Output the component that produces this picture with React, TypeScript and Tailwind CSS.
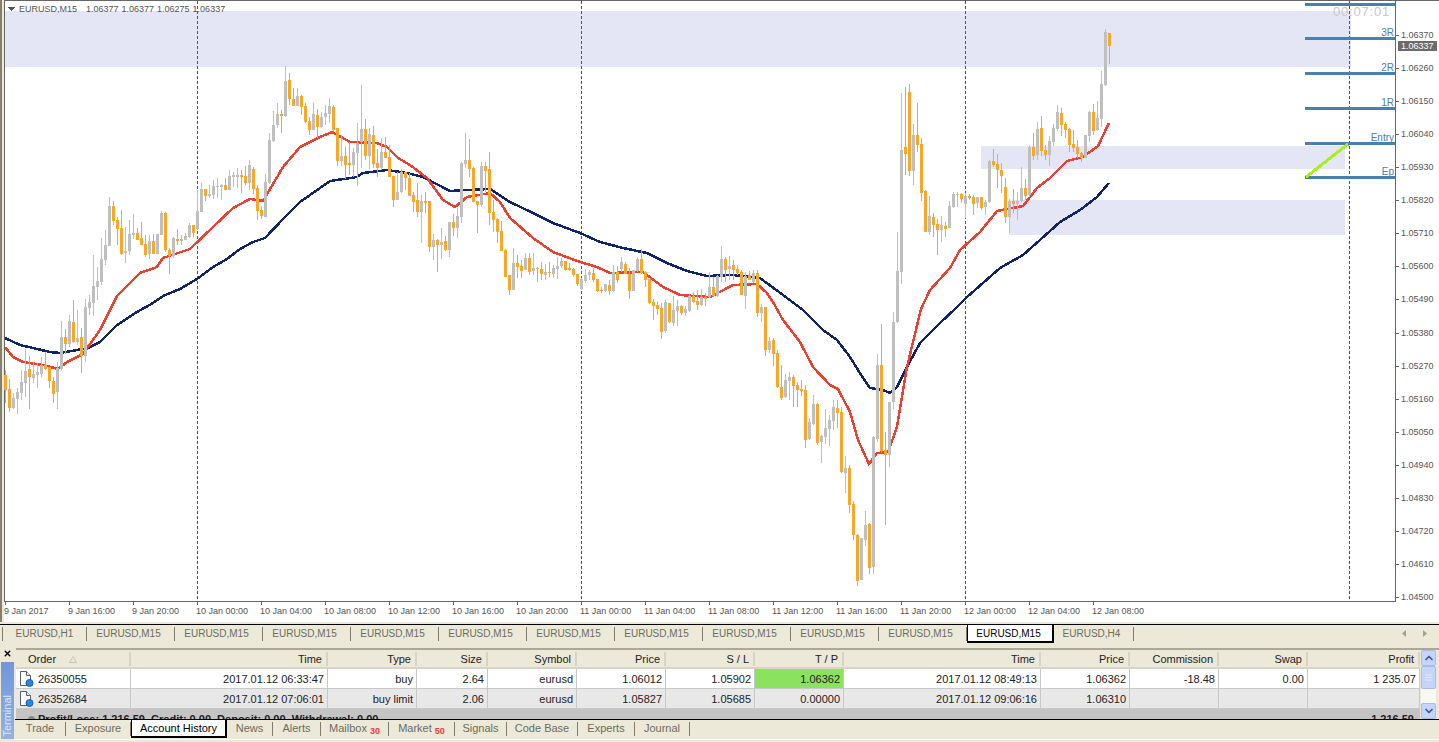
import { ChevronDown, ChevronUp, Menu, X } from 'lucide-react';

// [colour, wick top, body top, body bottom, wick bottom]; one bar every 4px from x=5
type Bar = ['o' | 'g', number, number, number, number];

const bars: Bar[] = [
  ['o',370,375,390,403],['o',379,389,408,412],['g',393,398,408,409],['g',388,392,399,414],['g',370,382,393,400],
  ['g',349,371,383,397],['o',356,369,377,409],['g',362,374,378,383],['g',363,372,375,388],['g',357,365,374,377],
  ['o',352,365,369,370],['o',367,367,381,388],['o',377,381,394,403],['g',362,368,392,409],['g',321,337,369,370],
  ['o',329,337,344,354],['g',315,321,344,347],['o',300,322,342,343],['g',310,338,342,345],['o',328,337,356,373],
  ['g',299,307,356,362],['g',295,302,308,315],['g',255,286,303,316],['g',267,281,287,300],['g',238,259,282,285],
  ['g',230,245,260,265],['g',197,206,246,246],['o',201,206,221,225],['o',217,220,229,245],['o',210,228,254,255],
  ['g',227,251,253,263],['g',220,234,251,255],['g',214,233,235,239],['o',228,233,240,240],['o',222,238,245,245],
  ['o',235,244,255,257],['g',235,241,254,259],['o',234,241,254,254],['g',234,234,254,254],['g',211,213,235,235],
  ['o',212,213,250,252],['o',248,250,256,274],['g',237,238,256,258],['o',229,239,241,245],['g',235,239,241,245],
  ['g',233,236,240,240],['g',223,225,237,238],['o',225,225,233,237],['g',190,211,229,230],['g',183,189,212,212],
  ['o',189,189,196,201],['g',185,194,196,198],['g',180,186,195,199],['g',178,186,187,198],['g',184,185,187,200],
  ['o',178,185,190,190],['g',170,176,190,190],['g',172,175,177,187],['g',168,175,177,188],['o',170,175,177,193],
  ['o',166,176,183,185],['g',160,165,183,190],['o',167,169,189,194],['o',185,188,211,220],['o',206,210,216,219],
  ['g',174,182,217,217],['g',133,140,183,184],['g',111,125,141,142],['g',103,114,125,128],['o',110,114,116,133],
  ['g',66,81,116,117],['o',73,80,99,105],['o',88,99,106,106],['g',88,96,106,106],['o',95,96,107,115],
  ['o',103,106,122,123],['o',117,121,130,135],['g',103,114,130,130],['o',109,115,127,138],['g',112,117,127,128],
  ['g',105,113,117,125],['g',98,106,114,123],['o',105,107,130,132],['o',128,128,161,166],['g',135,156,161,166],
  ['o',147,156,165,179],['o',142,163,165,175],['g',148,152,165,177],['g',123,143,153,186],['g',85,129,142,168],
  ['o',119,129,156,160],['g',128,134,156,169],['o',126,135,164,168],['o',149,163,168,177],['g',138,152,168,170],
  ['o',137,152,158,158],['o',145,157,177,177],['o',176,176,200,207],['g',172,192,200,200],['g',169,172,192,193],
  ['o',172,172,178,190],['o',173,178,196,196],['o',192,195,202,212],['o',183,200,212,217],['g',195,201,212,243],
  ['o',192,201,203,213],['o',201,201,247,252],['g',234,240,247,260],['o',239,240,245,272],['g',228,242,245,259],
  ['o',236,241,250,251],['g',222,222,250,257],['o',214,222,228,236],['g',208,216,228,238],['g',162,163,217,223],
  ['g',133,160,164,168],['o',139,160,169,177],['o',167,168,202,202],['o',201,201,205,233],['g',162,166,205,207],
  ['o',162,166,171,192],['o',152,169,213,225],['o',200,212,220,232],['o',218,219,232,243],['o',221,231,251,251],
  ['o',249,250,277,277],['o',275,275,290,295],['g',248,263,290,290],['o',255,263,267,278],['o',260,266,271,278],
  ['g',253,258,270,270],['o',253,258,272,275],['g',253,268,271,275],['o',267,268,269,282],['o',262,269,274,280],
  ['g',264,272,275,280],['o',262,272,273,277],['g',265,268,274,278],['g',257,266,269,279],['g',258,261,266,268],
  ['o',261,261,270,271],['o',263,268,270,271],['o',268,269,275,277],['o',274,274,284,286],['g',278,279,289,290],
  ['g',269,275,281,283],['g',270,272,275,280],['o',268,273,280,282],['o',279,279,291,292],['o',287,290,291,293],
  ['g',284,284,291,292],['o',280,285,291,295],['g',265,272,291,292],['o',266,272,280,283],['g',257,262,269,272],
  ['o',262,264,274,274],['o',268,274,291,299],['g',270,270,291,291],['g',257,259,271,272],['o',249,259,273,274],
  ['o',271,272,280,287],['o',279,279,303,304],['o',299,302,306,320],['o',302,305,309,315],['o',303,308,332,339],
  ['g',300,302,331,333],['o',303,303,322,323],['g',296,310,323,326],['g',300,306,311,326],['o',305,306,313,315],
  ['g',306,309,313,316],['g',294,296,311,312],['o',292,296,302,303],['o',290,301,305,310],['g',289,297,305,306],
  ['o',293,297,299,306],['g',272,287,297,298],['o',277,287,296,297],['g',275,276,296,297],['g',246,259,277,282],
  ['o',257,259,270,282],['g',256,266,269,280],['o',260,265,270,280],['o',265,269,273,275],['o',270,272,295,295],
  ['g',272,276,296,309],['o',271,275,280,280],['g',270,273,282,283],['o',270,273,313,317],['g',304,307,313,322],
  ['o',307,307,350,356],['g',337,341,350,353],['o',338,340,354,366],['o',350,353,387,388],['o',365,387,398,400],
  ['g',374,380,397,398],['g',372,377,381,400],['o',375,377,386,407],['o',382,385,390,407],['o',380,389,391,396],
  ['o',385,390,440,448],['g',418,422,439,440],['g',395,404,424,425],['o',403,404,443,445],['g',435,436,442,463],
  ['g',409,428,437,444],['g',415,420,429,446],['g',400,407,421,430],['o',400,408,413,428],['o',407,412,472,473],
  ['g',456,468,473,493],['o',465,468,505,513],['o',501,504,535,540],['o',534,535,581,586],['g',538,538,580,580],
  ['g',511,525,540,546],['o',523,524,568,574],['g',436,437,567,574],['g',354,365,439,442],['o',324,365,451,453],
  ['o',432,450,455,525],['g',402,402,455,467],['g',312,322,402,409],['g',232,271,322,323],['g',93,150,272,284],
  ['o',87,147,154,175],['o',84,92,171,176],['g',124,135,171,185],['o',103,135,145,152],['o',138,144,193,201],
  ['o',190,191,232,232],['g',196,216,232,235],['o',213,217,225,237],['o',219,224,230,255],['g',216,225,230,242],
  ['o',222,226,229,237],['g',201,206,228,228],['g',192,194,207,208],['g',192,194,195,207],['o',193,194,199,203],
  ['g',193,196,204,218],['o',194,196,198,200],['o',195,197,204,215],['g',197,197,203,208],['o',197,197,208,210],
  ['g',200,202,207,215],['g',160,161,202,203],['o',149,161,165,167],['o',154,164,170,188],['o',163,170,176,193],
  ['o',178,187,217,223],['g',199,201,217,233],['o',189,201,204,213],['g',192,201,204,220],['g',167,188,201,202],
  ['o',179,188,196,200],['g',145,147,195,197],['o',133,147,156,160],['g',122,129,155,160],['o',116,128,151,156],
  ['o',145,150,155,160],['g',136,141,155,166],['g',124,128,142,146],['g',105,112,129,131],['o',108,113,125,136],
  ['o',122,124,130,138],['o',128,129,145,152],['o',130,144,148,152],['o',140,147,154,158],['o',152,153,158,162],
  ['g',135,135,158,158],['g',111,112,136,142],['o',104,112,131,135],['g',101,118,130,131],['g',71,84,119,127],
  ['g',29,32,85,86],['o',33,33,46,64],
];

const slowMa = '5,338 20,345 33,348 50,352 60,353 77,350 88,348 100,342 117,325 137,312 153,303 163,296 180,289 197,279 213,267 227,259 240,249 253,242 265,238 283,219 300,202 330,181 357,177 363,173 387,170 407,173 423,177 450,191 467,190 490,189 510,202 533,213 553,223 580,233 600,242 623,248 647,253 667,263 687,271 707,276 733,275 760,278 783,295 803,310 823,330 837,340 850,357 863,378 870,388 883,390 890,393 897,387 907,367 920,343 940,323 955,309 967,297 983,283 1000,268 1023,255 1040,240 1060,222 1080,210 1097,197 1109,183';
const fastMa = '5,347 13,357 23,362 43,365 58,369 67,362 83,354 100,330 117,296 140,273 157,267 163,258 190,249 213,227 233,208 250,199 263,201 283,167 300,147 320,137 332,132 350,142 377,143 387,147 398,158 410,165 427,178 443,200 455,207 467,197 490,193 500,202 510,218 533,238 553,252 580,262 597,267 610,273 643,272 663,287 680,295 710,297 733,285 757,284 767,293 773,302 783,320 800,342 813,367 830,385 838,389 850,412 858,440 869,464 877,453 888,452 897,427 907,367 921,309 930,290 950,268 960,250 980,232 997,211 1023,206 1037,188 1050,178 1067,161 1083,157 1098,146 1109,123';

const prices = ['1.06370','1.06260','1.06150','1.06040','1.05930','1.05820','1.05710','1.05600','1.05490','1.05380','1.05270','1.05160','1.05050','1.04940','1.04830','1.04720','1.04610','1.04500'];
const times = ['9 Jan 2017','9 Jan 16:00','9 Jan 20:00','10 Jan 00:00','10 Jan 04:00','10 Jan 08:00','10 Jan 12:00','10 Jan 16:00','10 Jan 20:00','11 Jan 00:00','11 Jan 04:00','11 Jan 08:00','11 Jan 12:00','11 Jan 16:00','11 Jan 20:00','12 Jan 00:00','12 Jan 04:00','12 Jan 08:00'];
const rays = [
  { y: 4, label: '4R', base: 1 },
  { y: 38, label: '3R', base: 36 },
  { y: 73, label: '2R', base: 71 },
  { y: 108, label: '1R', base: 106 },
  { y: 143, label: 'Entry', base: 141 },
  { y: 177, label: 'Ep', base: 175 },
];

function Chart() {
  return (
    <svg width="1435" height="622" viewBox="4 0 1435 622" shapeRendering="crispEdges" className="block bg-white">
      <rect x="5" y="11" width="1346" height="56" fill="#e4e6f6" />
      <rect x="981" y="146" width="364" height="23" fill="#e4e6f6" />
      <rect x="1009" y="200" width="336" height="35" fill="#e4e6f6" />

      <rect x="4" y="0" width="1435" height="1" fill="#666" />
      <rect x="4" y="0" width="1" height="602" fill="#666" />
      <rect x="4" y="601" width="1392" height="1" fill="#666" />
      <rect x="1395" y="0" width="1" height="602" fill="#666" />

      {[197, 581, 965, 1349].map((x) => (
        <line key={x} x1={x + 0.5} x2={x + 0.5} y1="1" y2="601" stroke="#555" strokeDasharray="3 2" />
      ))}

      <polyline points={slowMa} fill="none" stroke="#10246c" strokeWidth="2.5" />
      <polyline points={fastMa} fill="none" stroke="#ea4130" strokeWidth="2.5" />

      {bars.map(([c, hi, top, bot, lo], i) => {
        const x = 5 + i * 4;
        const fill = c === 'o' ? '#f9a72b' : '#bfbfbf';
        return (
          <g key={i} fill={fill}>
            <rect x={x} y={hi} width="1" height={lo - hi} />
            <rect x={x - 1} y={top} width="3" height={Math.max(bot - top, 1)} />
          </g>
        );
      })}

      {rays.map((r) => (
        <g key={r.label}>
          <rect x="1305" y={r.y - 1} width="90" height="3" fill="#4a80b0" />
          <text x="1394" y={r.base} textAnchor="end" fill="#4a80b0" className="text-[10px]">{r.label}</text>
        </g>
      ))}
      <line x1="1306" y1="177" x2="1348" y2="144" stroke="#a6f01e" strokeWidth="3" />

      <text x="1333" y="16" fill="#c8c8c8" className="text-[13px] tracking-[0.8px]">00:07:01</text>

      <path d="M8 7h7l-3.5 4z" fill="#555" />
      <text x="19" y="12" fill="#555" className="text-[9px] whitespace-pre [word-spacing:0.5px]">EURUSD,M15   1.06377 1.06377 1.06275 1.06337</text>

      {prices.map((p, i) => {
        const y = Math.round(35 + i * 33.06);
        return (
          <g key={p}>
            <rect x="1396" y={y} width="3" height="1" fill="#666" />
            <text x="1401" y={y + 3} fill="#555" className="text-[9px]">{p}</text>
          </g>
        );
      })}
      <rect x="1398" y="41" width="39" height="10" fill="#6b6b6b" />
      <text x="1401" y="49" fill="#fff" className="text-[9px]">1.06337</text>

      {times.map((t, i) => {
        const x = 4 + i * 64;
        return (
          <g key={t}>
            <rect x={x + 1} y="602" width="1" height="3" fill="#666" />
            <text x={x} y="614" fill="#555" className="text-[9px]">{t}</text>
          </g>
        );
      })}
    </svg>
  );
}

const chartTabs = ['EURUSD,M15', 'EURUSD,M15', 'EURUSD,M15', 'EURUSD,M15', 'EURUSD,M15', 'EURUSD,M15', 'EURUSD,M15', 'EURUSD,M15', 'EURUSD,M15', 'EURUSD,M15'];

function ChartTabs() {
  return (
    <div className="flex h-[21px] items-start border-t border-black pl-[2px] text-[10px] text-[#6b6b5e]">
      <div className="mt-[2px] h-[14px] border-l border-[#807c6c]" />
      <div className="mt-[2px] flex h-[14px] w-[84px] items-center justify-center border-r border-[#807c6c] pb-[2px]">EURUSD,H1</div>
      {chartTabs.map((t, i) => (
        <div key={i} className="mt-[2px] flex h-[14px] w-[88px] items-center justify-center border-r border-[#807c6c] pr-[4px] pb-[2px]">
          {t}
        </div>
      ))}
      <div className="flex h-[18px] w-[87px] items-center justify-center border-r-2 border-b-2 border-l border-black bg-white pr-[3px] text-black">
        EURUSD,M15
      </div>
      <div className="mt-[2px] flex h-[14px] w-[80px] items-center justify-center border-r border-[#807c6c] pr-[4px] pb-[2px]">EURUSD,H4</div>
      <div className="mt-[5px] ml-auto flex w-[37px] gap-[15px] pr-[6px]">
        <svg width="5" height="7" viewBox="0 0 5 7"><path d="M4 0v7L0 3.5z" fill="#a0a094" /></svg>
        <svg width="5" height="7" viewBox="0 0 5 7"><path d="M1 0v7l4-3.5z" fill="#a0a094" /></svg>
      </div>
    </div>
  );
}

const columns = 'grid grid-cols-[115px_197px_89px_71px_89px_89px_89px_89px_197px_89px_89px_89px_112px]';
const headers = ['Time', 'Type', 'Size', 'Symbol', 'Price', 'S / L', 'T / P', 'Time', 'Price', 'Commission', 'Swap', 'Profit'];
const rows = [
  ['26350055', '2017.01.12 06:33:47', 'buy', '2.64', 'eurusd', '1.06012', '1.05902', '1.06362', '2017.01.12 08:49:13', '1.06362', '-18.48', '0.00', '1 235.07'],
  ['26352684', '2017.01.12 07:06:01', 'buy limit', '2.06', 'eurusd', '1.05827', '1.05685', '0.00000', '2017.01.12 09:06:16', '1.06310', '', '', ''],
];

function DocIcon() {
  return (
    <svg width="15" height="16" viewBox="0 0 15 16" className="shrink-0">
      <path d="M1.5.5h6l4 4v10h-10z" fill="#fff" stroke="#55606c" />
      <path d="M7.5.5v4h4" fill="#e4e8ee" stroke="#55606c" />
      <circle cx="10.5" cy="12" r="3.5" fill="#2a86dc" stroke="#1c5ea8" />
    </svg>
  );
}

function OrdersList() {
  return (
    <div className="ml-[1px] flex h-[71px] overflow-hidden">
      <div className="w-[1404px] shrink-0">
        <div className={`${columns} h-[21px] items-center border-t-2 border-b-2 border-t-[#aca899] border-b-[#d8d4c6] pt-[1px]`}>
          <div className="flex h-[14px] items-center gap-[13px] border-r-2 border-[#d8d4c4] pl-[12px]">
            Order
            <svg width="8" height="7" viewBox="0 0 8 7"><path d="M4 .5l3.5 6h-7z" fill="none" stroke="#c8c4b4" /></svg>
          </div>
          {headers.map((h, i) => (
            <div key={i} className="flex h-[14px] items-center justify-end border-r-2 border-[#d8d4c4] pr-[4px]">{h}</div>
          ))}
        </div>
        {rows.map((r, i) => (
          <div key={r[0]} className={`${columns} h-[20px] ${i === 0 ? 'bg-white' : 'bg-[#e8e8e8]'}`}>
            {r.map((c, j) => (
              <div
                key={j}
                className={`flex items-center border-r border-b border-[#c8c8c8] pt-[1px] pr-[3px] ${j === 0 ? 'justify-start gap-[4px] pl-[3px]' : 'justify-end'} ${j === 7 && i === 0 ? 'bg-[#8ae25e]' : ''}`}
              >
                {j === 0 && <DocIcon />}
                {c}
              </div>
            ))}
          </div>
        ))}
        <div className="flex h-[20px] items-center justify-between bg-[#c4c4c4] pr-[6px] pl-[12px] font-bold">
          <div className="flex items-center gap-[3px] whitespace-pre">
            <span className="h-[7px] w-[7px] rounded-full bg-[#8a8a8a]" />
            Profit/Loss: 1 216.59  Credit: 0.00  Deposit: 0.00  Withdrawal: 0.00
          </div>
          <span>1 216.59</span>
        </div>
      </div>
      <div className="flex w-[19px] flex-col border-t-2 border-[#aca899] pr-[3px] pl-[1px]">
        <div className="flex h-[16px] items-center justify-center rounded-[2px] border border-[#a6bde8] bg-[#c4d4fb] text-[#3d5a94]">
          <ChevronUp size={12} strokeWidth={3.5} />
        </div>
        <div className="flex h-[23px] items-center justify-center rounded-[2px] border border-[#a6bde8] bg-[#c4d4fb] text-[#eef2fe]">
          <Menu size={9} strokeWidth={2} />
        </div>
        <div className="h-[14px] bg-[#f8f8f2]" />
        <div className="flex h-[16px] items-center justify-center rounded-[2px] border border-[#a6bde8] bg-[#c4d4fb] text-[#3d5a94]">
          <ChevronDown size={12} strokeWidth={3.5} />
        </div>
      </div>
    </div>
  );
}

const bottomTabs = [
  { name: 'Trade', w: 'w-[51px]' },
  { name: 'Exposure', w: 'w-[65px]' },
  { name: 'Account History', w: 'w-[96px]', active: true },
  { name: 'News', w: 'w-[46px]' },
  { name: 'Alerts', w: 'w-[48px]' },
  { name: 'Mailbox', w: 'w-[68px]', badge: '30' },
  { name: 'Market', w: 'w-[66px]', badge: '50' },
  { name: 'Signals', w: 'w-[52px]' },
  { name: 'Code Base', w: 'w-[71px]' },
  { name: 'Experts', w: 'w-[57px]' },
  { name: 'Journal', w: 'w-[55px]' },
];

function BottomTabs() {
  return (
    <div className="flex h-[21px] items-start border-t border-b border-t-black border-b-[#f7f6ee] text-[#6b6b5e]">
      {bottomTabs.map((t) =>
        t.active ? (
          <div key={t.name} className={`${t.w} flex h-[18px] items-center justify-center border-r-2 border-b-2 border-l border-black bg-white text-black`}>
            {t.name}
          </div>
        ) : (
          <div key={t.name} className={`${t.w} mt-[2px] flex h-[14px] items-center justify-center border-r border-[#807c6c] pb-[2px]`}>
            {t.name}
            {t.badge && <span className="mt-[8px] ml-[3px] text-[9px] font-bold text-[#e84040]">{t.badge}</span>}
          </div>
        ),
      )}
    </div>
  );
}

export default function App() {
  return (
    <div className="flex h-[742px] w-[1439px] flex-col overflow-hidden bg-[#ece9d8] text-[11px] text-[#222] [font-family:'Liberation_Sans',Arial,sans-serif]">
      <div className="flex h-[622px]">
        <div className="w-[2px] bg-[#84806f]" />
        <div className="w-[2px]" />
        <Chart />
      </div>
      <div className="h-[2px]" />
      <ChartTabs />
      <div className="flex h-[97px]">
        <div className="flex w-[15px] shrink-0 flex-col">
          <div className="flex h-[17px] items-center justify-center text-black">
            <X size={9} strokeWidth={4} />
          </div>
          <div className="ml-[1px] flex h-[77px] w-[13px] items-end justify-center bg-gradient-to-b from-[#6f97dc] to-[#93b0e2] pb-[2px]">
            <span className="rotate-180 text-[11px] text-[#dce6f6] [writing-mode:vertical-rl]">Terminal</span>
          </div>
        </div>
        <div className="min-w-0 flex-1 pt-[3px]">
          <OrdersList />
          <BottomTabs />
        </div>
      </div>
    </div>
  );
}
